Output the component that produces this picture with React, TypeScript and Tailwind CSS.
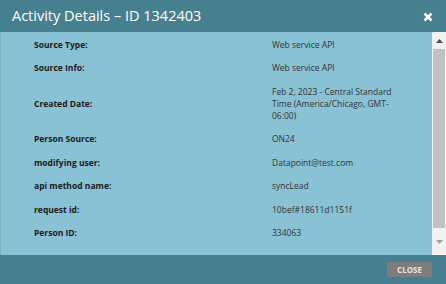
import React from 'react';

interface DetailRow {
  label: string;
  value: string;
}

const rows: DetailRow[] = [
  { label: 'Source Type:', value: 'Web service API' },
  { label: 'Source Info:', value: 'Web service API' },
  { label: 'Created Date:', value: 'Feb 2, 2023 - Central Standard Time (America/Chicago, GMT-06:00)' },
  { label: 'Person Source:', value: 'ON24' },
  { label: 'modifying user:', value: 'Datapoint@test.com' },
  { label: 'api method name:', value: 'syncLead' },
  { label: 'request id:', value: '10bef#18611d1151f' },
  { label: 'Person ID:', value: '334063' },
];

export default function App() {
  return (
    <div className="w-[446px] h-[284px] flex flex-col bg-[#467f8f] overflow-hidden font-['Open_Sans',sans-serif]">
      {/* header */}
      <div className="h-[32px] flex items-center justify-between pl-[12px] pr-[13px] shrink-0">
        <h2 className="text-[14.5px] text-white">Activity Details – ID 1342403</h2>
        <svg width="10" height="10" viewBox="0 0 10 10" className="mt-[1px]">
          <path d="M1.5 1.5 L8.5 8.5 M8.5 1.5 L1.5 8.5" stroke="white" strokeWidth="2.6" strokeLinecap="butt" />
        </svg>
      </div>

      {/* body */}
      <div className="h-[223px] flex bg-[#88c2d4] border-l border-[#7eb5c6] shrink-0">
        <div className="flex-1 pt-[1px]">
          <table className="border-collapse">
            <tbody>
              {rows.map((row) => (
                <tr key={row.label}>
                  <td className="w-[271px] pl-[33px] py-[5.75px] align-middle text-[8.5px] leading-[12px] font-bold text-[#1a1a1a]">
                    {row.label}
                  </td>
                  <td className="w-[125px] py-[5.75px] align-middle text-[8.5px] leading-[12px] text-[#333]">
                    {row.value}
                  </td>
                </tr>
              ))}
            </tbody>
          </table>
        </div>
        {/* scrollbar */}
        <div className="w-[14px] bg-[#f1f1f1] flex flex-col items-center">
          <div className="h-[17px] flex items-center justify-center">
            <svg width="7" height="4" viewBox="0 0 7 4"><path d="M3.5 0 L7 4 L0 4 Z" fill="#505050" /></svg>
          </div>
          <div className="w-[12px] h-[179px] bg-[#c1c1c1]" />
          <div className="flex-1 flex items-center justify-center">
            <svg width="7" height="4" viewBox="0 0 7 4"><path d="M0 0 L7 0 L3.5 4 Z" fill="#a3a3a3" /></svg>
          </div>
        </div>
      </div>

      {/* footer */}
      <div className="flex-1 flex items-center justify-end pr-[14px]">
        <button className="w-[45px] h-[15px] bg-[#7d7d7d] text-[#e6e6e6] text-[8px] font-bold leading-none flex items-center justify-center">
          CLOSE
        </button>
      </div>
    </div>
  );
}
